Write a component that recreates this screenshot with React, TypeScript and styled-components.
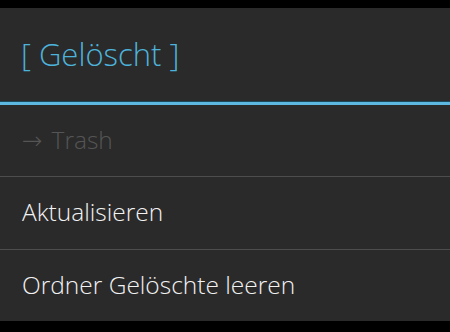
import React from "react";
import styled, { createGlobalStyle } from "styled-components";

const Global = createGlobalStyle`
  html, body { margin: 0; padding: 0; background: #000; }
  body { font-family: "Open Sans", "Noto Sans", "DejaVu Sans", sans-serif; }
`;

const Screen = styled.div`
  width: 450px;
  height: 332px;
  background: #000;
  padding-top: 8px;
  box-sizing: border-box;
`;

const Dialog = styled.div`
  height: 313px;
  background: #2a2a2a;
  display: flex;
  flex-direction: column;
`;

const Header = styled.div`
  height: 94px;
  display: flex;
  align-items: center;
  padding-left: 21px;
  box-sizing: border-box;
  color: #4db3db;
  font-size: 31px;
  font-weight: 300;
  padding-bottom: 2px;
`;

const Accent = styled.div`
  height: 3px;
  background: #5cb8df;
  box-shadow: 0 -1px 0 #1d4a5a;
`;

const Row = styled.div<{ $disabled?: boolean; $last?: boolean }>`
  flex: 1;
  display: flex;
  align-items: center;
  padding-left: 22px;
  font-size: 24.5px;
  font-weight: 300;
  color: ${(p) => (p.$disabled ? "#555555" : "#f2f2f2")};
  border-bottom: ${(p) => (p.$last ? "none" : "1px solid #4d4d4d")};
  padding-bottom: 2px;
`;

const Arrow = styled.span`
  margin-right: 9px;
`;

export default function App() {
  return (
    <>
      <Global />
      <Screen>
        <Dialog>
          <Header>[ Gelöscht ]</Header>
          <Accent />
          <Row $disabled>
            <Arrow>→</Arrow>Trash
          </Row>
          <Row>Aktualisieren</Row>
          <Row $last>Ordner Gelöschte leeren</Row>
        </Dialog>
      </Screen>
    </>
  );
}
